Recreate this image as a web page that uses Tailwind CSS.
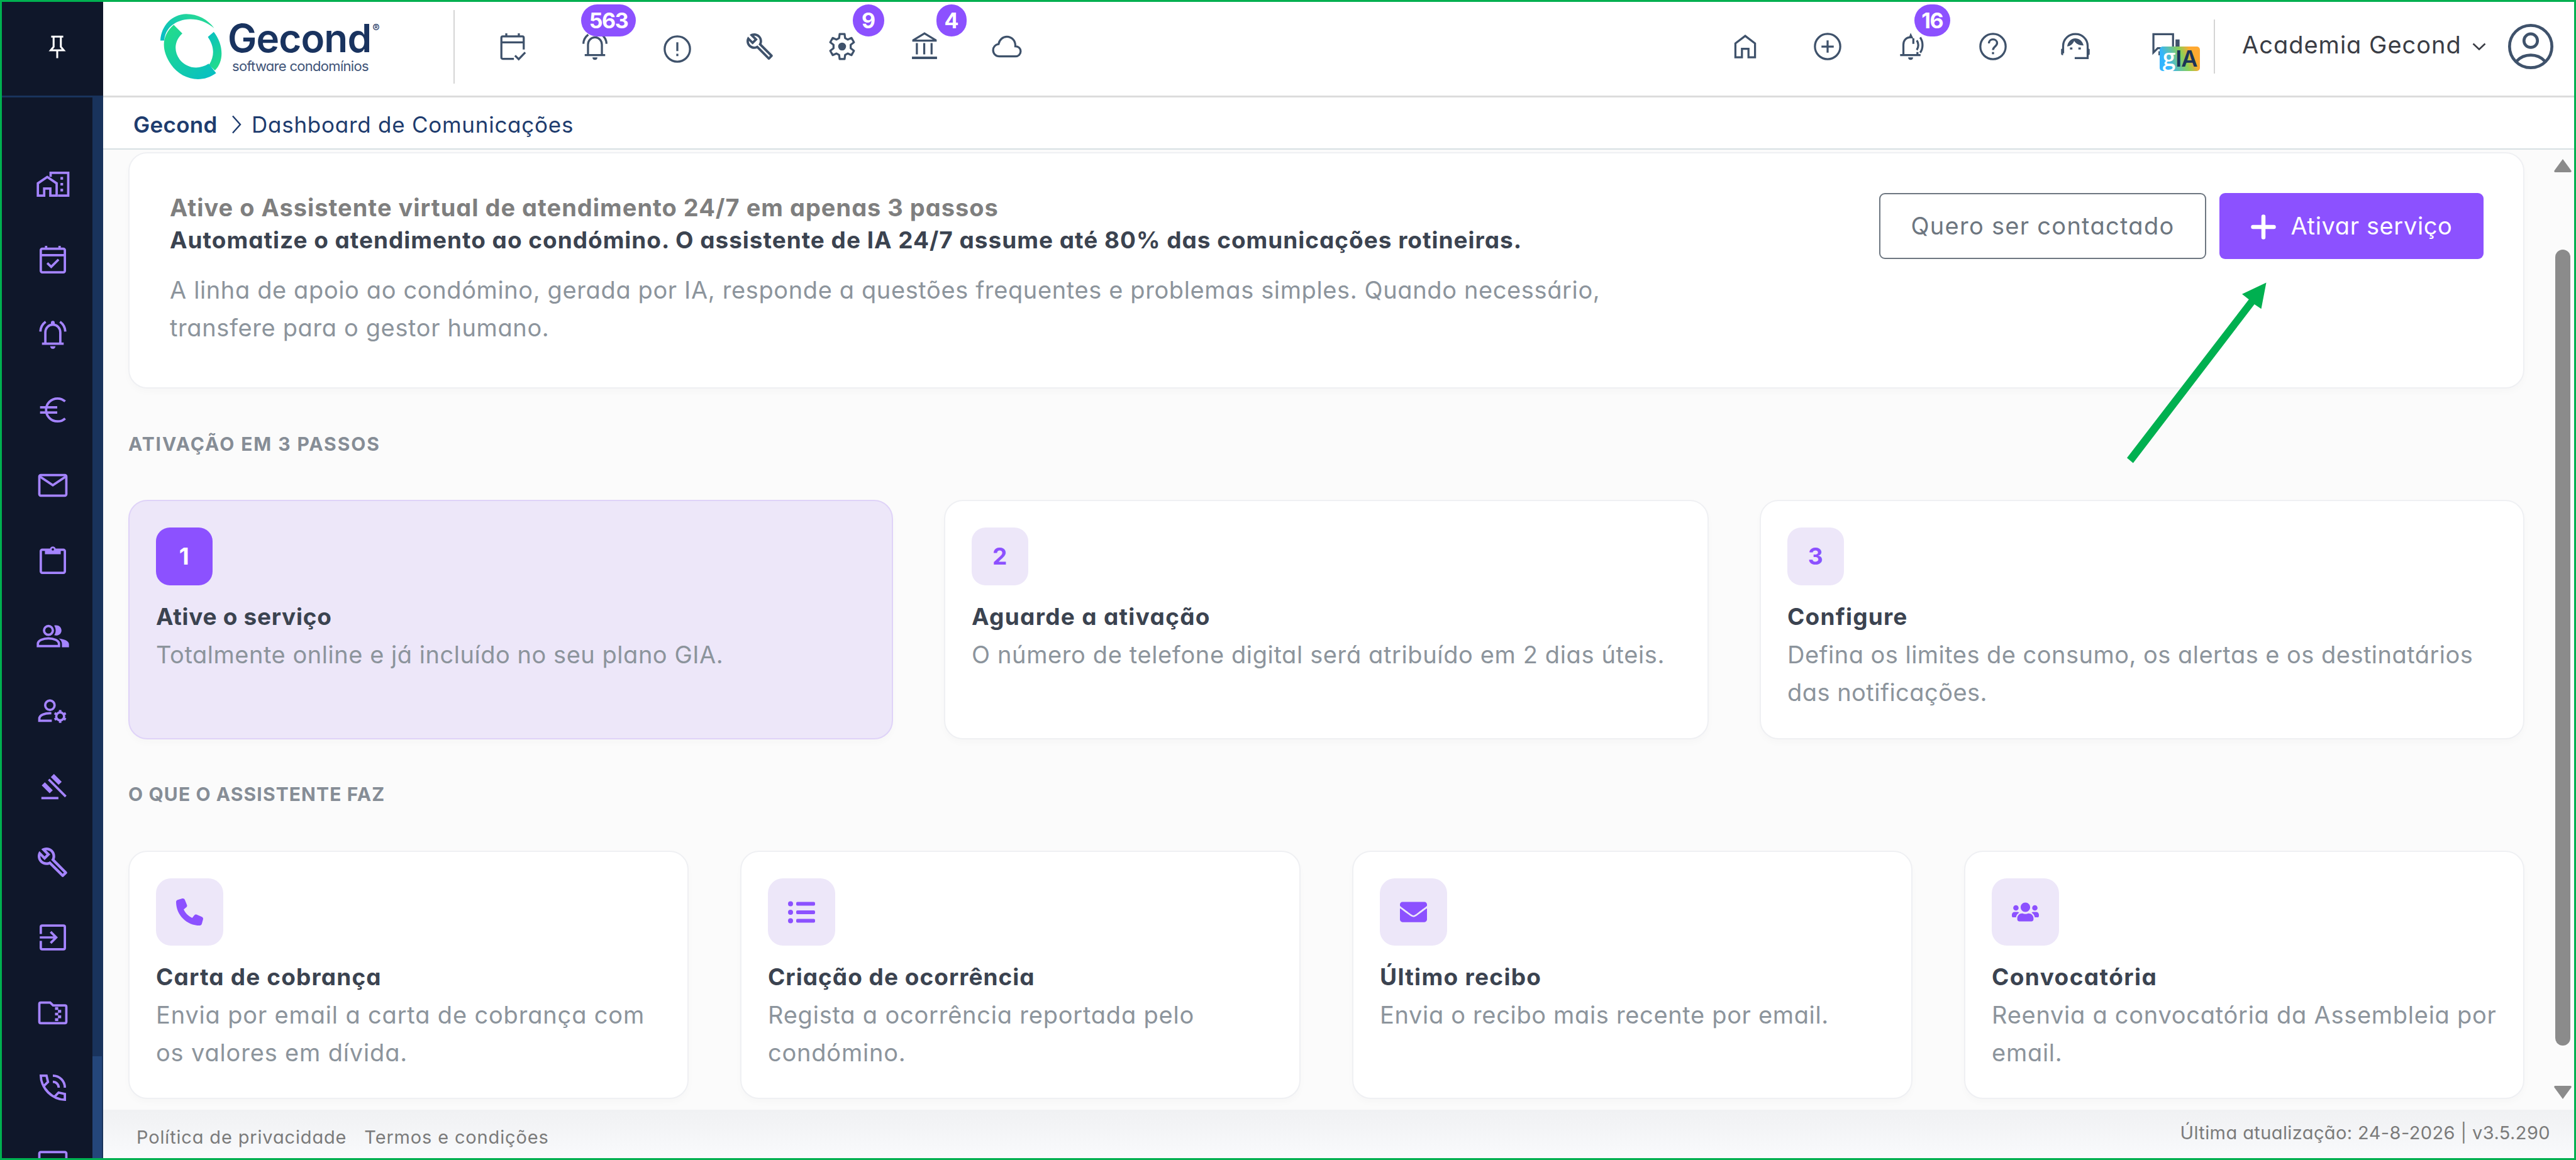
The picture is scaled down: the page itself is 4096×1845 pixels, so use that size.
<!DOCTYPE html>
<html lang="pt">
<head>
    <meta charset="UTF-8">
    <meta name="viewport" content="width=device-width, initial-scale=1.0">
    <title>Gecond - Dashboard de Comunicações</title>
    <script src="https://cdn.jsdelivr.net/npm/@tailwindcss/browser@4"></script>
</head>
<body class="bg-white font-['Inter',sans-serif] [font-feature-settings:'cv11'] overflow-hidden">
    <div class="relative flex w-[4096px] h-[1845px] border-[3px] border-[#00b050] overflow-hidden">

        <!-- Sidebar -->
        <aside class="flex flex-col w-[161px] shrink-0 bg-[#0f172a]">
            <div class="flex items-center justify-center h-[152px] shrink-0 border-b-[3px] border-[#19335c] pl-[14px] pb-[7px]">
                <svg class="size-[46px] text-white" viewBox="0 0 24 24" fill="none" stroke="currentColor" stroke-width="1.6"><path d="M7 3.8h10M9 3.8v8.4l-2.4 2.9h10.8L15 12.2V3.8M12 15.1v6.6"/></svg>
            </div>
            <div class="flex flex-1 min-h-0">
                <nav class="flex flex-col w-[144px] pt-[78px] pl-[3px] overflow-hidden text-[#a584ff]">
                    <a class="flex items-center justify-center h-[119.8px] pl-[14px] shrink-0"><svg class="size-[56px]" viewBox="0 0 24 24" fill="none" stroke="currentColor" stroke-width="1.6"><path d="M10.5 7V4.2h12v15.6h-7M1.8 19.8v-8.4l6.4-4.3 6.4 4.3v8.4h-4.3v-4.9H6.1v4.9z"/><path stroke-width="1.8" d="M17.2 8h1.8M17.2 12h1.8M17.2 16h1.8"/></svg></a>
                    <a class="flex items-center justify-center h-[119.8px] pl-[14px] shrink-0"><svg class="size-[56px]" viewBox="0 0 24 24" fill="none" stroke="currentColor" stroke-width="1.6"><rect x="3.8" y="4.6" width="16.4" height="16" rx="1"/><path d="M3.8 8.9h16.4M7.4 2.6v2M16.6 2.6v2M8.2 14.3l2.7 2.6 5-5"/></svg></a>
                    <a class="flex items-center justify-center h-[119.8px] pl-[14px] shrink-0"><svg class="size-[56px]" viewBox="0 0 24 24" fill="none" stroke="currentColor" stroke-width="1.6"><path d="M4.6 18.3h14.8M6.9 18.3v-7.7c0-3 2.2-5.3 5.1-5.3s5.1 2.3 5.1 5.3v7.7M3.5 10c.1-2.7 1.4-5.1 3.6-6.7M20.5 10c-.1-2.7-1.4-5.1-3.6-6.7"/><path fill="currentColor" stroke="none" d="M10.2 20h3.6a1.8 1.8 0 0 1-3.6 0zM10.7 5.6V4a1.3 1.3 0 0 1 2.6 0v1.6z"/></svg></a>
                    <a class="flex items-center justify-center h-[119.8px] pl-[14px] shrink-0"><svg class="size-[56px]" viewBox="0 0 24 24" fill="none" stroke="currentColor" stroke-width="1.6"><path d="M20.4 6.2a8 8 0 0 0-5.2-2c-4.4 0-7.8 3.5-7.8 7.8s3.4 7.8 7.8 7.8c2 0 3.8-.7 5.2-2M3.3 10.2H15M3.3 13.8H15"/></svg></a>
                    <a class="flex items-center justify-center h-[119.8px] pl-[14px] shrink-0"><svg class="size-[56px]" viewBox="0 0 24 24" fill="none" stroke="currentColor" stroke-width="1.6"><rect x="2.8" y="5" width="18.4" height="14" rx="1"/><path d="M3.2 6l8.8 5.9L20.8 6"/></svg></a>
                    <a class="flex items-center justify-center h-[119.8px] pl-[14px] shrink-0"><svg class="size-[56px]" viewBox="0 0 24 24" fill="none" stroke="currentColor" stroke-width="1.6"><rect x="3.8" y="4.4" width="16.4" height="15.8" rx="1"/><path fill="currentColor" stroke="none" d="M6.6 4.2h10.8v3.3H6.6z"/><circle cx="12" cy="4.2" r="1.4" fill="#0f172a" stroke-width="1.2"/></svg></a>
                    <a class="flex items-center justify-center h-[119.8px] pl-[14px] shrink-0"><svg class="size-[56px]" viewBox="0 0 24 24" fill="none" stroke="currentColor" stroke-width="1.6"><circle cx="9" cy="8" r="3"/><path d="M1.8 18.7v-1.5c0-2.4 3.7-3.8 7.2-3.8s7.2 1.4 7.2 3.8v1.5z"/><path fill="currentColor" stroke="none" d="M12.9 11.3c1.4-1.9 1.4-4.7 0-6.6 2.5-.8 5 .8 5 3.3s-2.5 4.1-5 3.300zM18.200 19.500v-2.300c0-1.500-.8-2.800-2.200-3.700 3.500.4 7 1.700 7 3.900v2.100z"/></svg></a>
                    <a class="flex items-center justify-center h-[119.8px] pl-[14px] shrink-0"><svg class="size-[56px]" viewBox="0 0 24 24" fill="none" stroke="currentColor" stroke-width="1.6"><circle cx="10" cy="8" r="3.2"/><path d="M11.3 18.6H2.8v-1.4c0-2.4 3.6-3.9 8.2-3.7"/><circle cx="17" cy="15.6" r="2.7"/><path stroke-width="1.7" d="M17 11.2V13M17 18.2V20M13.2 13.4l1.5.9M19.3 16.9l1.5.9M13.2 17.8l1.5-.9M19.3 14.3l1.5-.9"/></svg></a>
                    <a class="flex items-center justify-center h-[119.8px] pl-[14px] shrink-0"><svg class="size-[56px]" viewBox="0 0 24 24" fill="none" stroke="currentColor" stroke-width="1.6"><path d="M4.200 19.900h11.600M9.200 7.200l11.600 11.600"/><path stroke-width="3" d="M11.700 4.500L17 9.800M5.500 10.200l5.400 5.400"/></svg></a>
                    <a class="flex items-center justify-center h-[119.8px] pl-[14px] shrink-0"><svg class="size-[47px]" viewBox="1 1 22 22" fill="currentColor"><path d="M22.61 18.99l-9.08-9.08c.93-2.34.45-5.1-1.44-7C9.79.61 6.21.4 3.66 2.26L7.5 6.11 6.08 7.52 2.25 3.69C.39 6.23.6 9.82 2.9 12.11c1.86 1.86 4.57 2.35 6.89 1.48l9.11 9.11c.39.39 1.02.39 1.41 0l2.3-2.3c.4-.38.4-1.01 0-1.41zm-3 1.6l-9.46-9.46c-.61.45-1.29.72-2 .82-1.36.2-2.79-.21-3.83-1.25C3.37 9.76 2.93 8.5 3 7.26l3.09 3.09 4.24-4.24-3.09-3.09c1.24-.07 2.49.37 3.44 1.31 1.08 1.08 1.49 2.57 1.24 3.96-.12.71-.42 1.37-.88 1.96l9.45 9.45-.88.89z"/></svg></a>
                    <a class="flex items-center justify-center h-[119.8px] pl-[14px] shrink-0"><svg class="size-[56px]" viewBox="0 0 24 24" fill="none" stroke="currentColor" stroke-width="1.6"><path d="M3.8 9.6V4.9c0-.6.4-1 1-1h14.4c.6 0 1 .4 1 1v14.2c0 .6-.4 1-1 1H4.8c-.6 0-1-.4-1-1v-4.7M3.1 12h11M10.5 8.2l3.8 3.8-3.8 3.8"/></svg></a>
                    <a class="flex items-center justify-center h-[119.8px] pl-[14px] shrink-0"><svg class="size-[56px]" viewBox="0 0 24 24" fill="none" stroke="currentColor" stroke-width="1.6"><path d="M2.8 18V6c0-.6.4-1 1-1h6.4l2 1.9h8c.6 0 1 .4 1 1V18c0 .6-.4 1-1 1H3.8c-.6 0-1-.4-1-1z"/><path stroke-width="1.9" d="M13.500 9h2.200M15.500 10.900h2.200M13.500 12.800h2.200M15.500 14.700h2.200M13.500 16.600h2.200"/></svg></a>
                    <a class="flex items-center justify-center h-[119.8px] pl-[14px] shrink-0"><svg class="size-[56px]" viewBox="0 0 24 24" fill="none" stroke="currentColor" stroke-width="1.6"><path d="M3.8 3.8h3.9l1 4.3-3 2.9c1.7 3.3 4 5.6 7.3 7.3l2.900-3 4.300 1v3.900C11.800 20.200 3.800 12.200 3.800 3.800zM12 3.800c4.600 0 8.200 3.600 8.200 8.200M12 8c2.300 0 4 1.700 4 4"/></svg></a>
                    <a class="flex items-center justify-center h-[119.8px] pl-[14px] shrink-0"><svg class="size-[56px]" viewBox="0 0 24 24" fill="none" stroke="currentColor" stroke-width="1.6"><rect x="2.8" y="4.4" width="18.4" height="14" rx="1"/></svg></a>
                </nav>
                <div class="flex flex-col justify-end w-[17px] bg-[#19335c]">
                    <div class="h-[162px] w-[15px] bg-[#24467a]"></div>
                </div>
            </div>
        </aside>

        <div class="flex flex-col flex-1 min-w-0">
            <!-- Top bar -->
            <header class="flex items-center h-[152px] shrink-0 border-b-[3px] border-[#dcdcdc] pb-[7px] text-[#3f526b]">
                <svg class="w-[98px] h-[104px] ml-[91px] shrink-0" viewBox="0 0 314 333">
                    <defs>
                        <linearGradient id="ga" x1="0" y1="1" x2="1" y2="0"><stop offset="0.1" stop-color="#08bdc4"/><stop offset="1" stop-color="#2ddf8b"/></linearGradient>
                        <linearGradient id="gb" x1="0" y1="0" x2="0.9" y2="1"><stop offset="0.1" stop-color="#22db8d"/><stop offset="1" stop-color="#07bfc3"/></linearGradient>
                        <linearGradient id="gc" x1="0" y1="0" x2="0.3" y2="1"><stop offset="0" stop-color="#07bfc3"/><stop offset="1" stop-color="#22db8d"/></linearGradient>
                    </defs>
                    <path fill="url(#ga)" d="M0 136C4 60 60 2 132 1c58 0 110 28 142 72C232 38 190 26 150 27 80 29 24 70 20 136z"/>
                    <path fill="url(#gc)" d="M272 92l-30 26c30 44 38 92 6 142l30 28c46-44 46-130-6-196z"/>
                    <path fill="url(#gb)" d="M68 56l44 44c-42 38-44 92-14 132 34 44 96 56 148 22l38 48c-78 58-180 30-230-44C4 184 4 112 68 56z"/>
                </svg>
                <div class="flex flex-col ml-[9px] mt-[1px] w-[240px] text-[#19335f] whitespace-nowrap">
                    <div class="flex items-start h-[60px]">
                        <span class="text-[62px] leading-[60px] font-semibold tracking-[-0.9px]">Gecond</span>
                        <span class="text-[17px] leading-[16px] mt-[6px] ml-[2px]">®</span>
                    </div>
                    <span class="text-[22px] leading-[28px] tracking-[-0.7px] pl-[7px] text-[#3f5478]">software condomínios</span>
                </div>
                <div class="w-[2px] h-[117px] bg-[#d5d5d5] ml-[119px]"></div>

                <div class="flex items-center gap-[79px] ml-[66px]">
                    <svg class="size-[52px]" viewBox="0 0 24 24" fill="none" stroke="currentColor" stroke-width="1.5"><path d="M13 21H4.8c-.6 0-1-.4-1-1V5.500c0-.6.4-1 1-1h14.400c.6 0 1 .4 1 1v8.700M3.800 8.900h16.400M7.400 2.300v2M16.600 2.300v2M13.800 18.600l2.700 2.700 4.800-5"/></svg>
                    <div class="relative">
                        <svg class="size-[52px]" viewBox="0 0 24 24" fill="none" stroke="currentColor" stroke-width="1.5"><path d="M4.5 18.3h15M6.900 18.300v-7.700c0-3 2.200-5.300 5.100-5.300s5.100 2.300 5.100 5.300v7.700M3.500 10c.1-2.700 1.400-5.100 3.600-6.700M20.500 10c-.1-2.700-1.400-5.100-3.600-6.700"/><path fill="currentColor" stroke="none" d="M10.200 20h3.600a1.800 1.800 0 0 1-3.600 0z"/></svg>
                        <span class="absolute left-[4px] top-[-41px] flex items-center justify-center w-[87px] h-[51px] rounded-full bg-[#8c51ff] text-white text-[34px] font-bold tracking-[-1.5px]">563</span>
                    </div>
                    <svg class="size-[52px] mt-[8px]" viewBox="0 0 24 24" fill="none" stroke="currentColor" stroke-width="1.5"><circle cx="12" cy="12" r="9.3"/><path d="M12 7v6.500M12 15.500v1.700"/></svg>
                    <div class="flex items-center justify-center size-[52px]"><svg class="size-[42px]" viewBox="1 1 22 22" fill="currentColor"><path d="M22.61 18.99l-9.08-9.08c.93-2.34.45-5.1-1.44-7C9.79.61 6.21.4 3.66 2.26L7.5 6.11 6.08 7.52 2.25 3.69C.39 6.23.6 9.82 2.9 12.11c1.86 1.86 4.57 2.35 6.89 1.48l9.11 9.11c.39.39 1.02.39 1.41 0l2.3-2.3c.4-.38.4-1.01 0-1.41zm-3 1.6l-9.46-9.46c-.61.45-1.29.72-2 .82-1.36.2-2.79-.21-3.83-1.25C3.37 9.76 2.93 8.5 3 7.26l3.09 3.09 4.24-4.24-3.09-3.09c1.24-.07 2.49.37 3.44 1.31 1.08 1.08 1.49 2.57 1.24 3.96-.12.71-.42 1.37-.88 1.96l9.45 9.45-.88.89z"/></svg></div>
                    <div class="relative">
                        <svg class="size-[52px]" viewBox="0 0 24 24" fill="none" stroke="currentColor" stroke-width="1.5" stroke-linejoin="round"><path d="M10.2 2.8h3.6l.4 3 1.9 1.1 2.8-1.2 1.8 3.2-2.4 1.8v2.6l2.4 1.8-1.8 3.2-2.8-1.2-1.9 1.1-.4 3h-3.6l-.4-3-1.9-1.1-2.8 1.2-1.8-3.2 2.4-1.8v-2.6L3.3 8.900l1.800-3.200 2.800 1.200 1.900-1.100z"/><circle cx="12" cy="12" r="2.900" fill="currentColor" stroke="none"/></svg>
                        <span class="absolute left-[43px] top-[-41px] flex items-center justify-center w-[50px] h-[51px] rounded-full bg-[#8c51ff] text-white text-[34px] font-bold">9</span>
                    </div>
                    <div class="relative">
                        <svg class="size-[52px]" viewBox="0 0 24 24" fill="none" stroke="currentColor" stroke-width="1.5"><path d="M3.8 7.3L12 2.4l8.2 4.9v.4H3.8zM6.400 9.500v8.300M11.800 9.500v8.300M17.200 9.500v8.300"/><path stroke-width="1.8" d="M2.8 20.3h18.4"/></svg>
                        <span class="absolute left-[45px] top-[-41px] flex items-center justify-center w-[48px] h-[51px] rounded-full bg-[#8c51ff] text-white text-[34px] font-bold">4</span>
                    </div>
                    <svg class="size-[52px]" viewBox="0 0 24 24" fill="none" stroke="currentColor" stroke-width="1.5"><path d="M6.5 19.2c-2.6 0-4.6-1.9-4.6-4.5 0-2.4 1.7-4.2 4-4.5.6-3.1 3-5.4 6.1-5.4 3.5 0 6.2 2.8 6.2 6.4v.6c2.3 0 3.9 1.6 3.900 3.700s-1.600 3.700-3.800 3.700z"/></svg>
                </div>

                <div class="flex items-center gap-[79.2px] ml-auto">
                    <svg class="size-[52px]" viewBox="0 0 24 24" fill="none" stroke="currentColor" stroke-width="1.5"><path d="M4.8 19.9V9.700L12 4.200l7.200 5.500v10.200h-4.800v-6.200H9.600v6.200z"/></svg>
                    <svg class="size-[52px]" viewBox="0 0 24 24" fill="none" stroke="currentColor" stroke-width="1.5"><circle cx="12" cy="12" r="9.3"/><path d="M12 7.500v9M7.500 12h9"/></svg>
                    <div class="relative">
                        <svg class="size-[52px]" viewBox="0 0 24 24" fill="none" stroke="currentColor" stroke-width="1.5"><path d="M4.300 18.300h15M6.700 18.300v-7.700c0-3 2-5.300 4.800-5.300M14 6v4M16.500 14.500c1.500-2 1.500-5 0-7M19 16.500c2.300-3 2.300-8 0-11.200M17 16v2.300"/><path fill="currentColor" stroke="none" d="M10.200 20h3.600a1.800 1.800 0 0 1-3.600 0zM10.500 6l1.500-4 2 4z"/></svg>
                        <span class="absolute left-[32px] top-[-41px] flex items-center justify-center w-[57px] h-[51px] rounded-full bg-[#8c51ff] text-white text-[34px] font-bold tracking-[-1.5px]">16</span>
                    </div>
                    <svg class="size-[52px]" viewBox="0 0 24 24" fill="none" stroke="currentColor" stroke-width="1.5"><circle cx="12" cy="12" r="9.3"/><path d="M9 9.700c0-1.700 1.300-2.900 3-2.900s3 1.100 3 2.700c0 2.400-3 2.600-3 5M12 16v1.700"/></svg>
                    <svg class="size-[52px]" viewBox="0 0 24 24" fill="none" stroke="currentColor" stroke-width="1.5"><path d="M3 17V11.500a9 8.700 0 0 1 18 0v9h-9.500"/><path fill="currentColor" stroke="none" d="M1.500 14l1.500-1v5.300h-.6c-.5 0-.9-.5-.9-1zM22.500 14L21 13v5.300h.6c.5 0 .9-.4.900-.9zM6 12c.4-3.400 2.800-6 5.900-6 2.900 0 5.400 2 6.100 5.200-3.100.2-5.400-1-6.900-3.400-.8 2.200-2.600 3.700-5.100 4.200z"/><path d="M8 13.400h1.800M14.200 13.400H16"/></svg>
                </div>
                <div class="relative ml-[92px]">
                    <svg class="size-[52px]" viewBox="0 0 24 24" fill="none" stroke="currentColor" stroke-width="1.5"><path d="M2.800 2.900h14.400v10.300H6L2.800 16.400z"/><path fill="currentColor" stroke="none" d="M19 6.800h3v7h-3zM6.500 15.500h3v3h-3z"/></svg>
                    <!-- gIA badge -->
                    <div class="absolute left-[16px] top-[26px] flex items-center justify-center w-[64px] h-[39px] rounded-[5px] bg-linear-[65deg,#33b4ff_20%,#8bcf55_58%,#ffa931_78%] leading-[39px]">
                        <span class="font-['Open_Sans'] font-semibold text-white text-[37px] mt-[-6px]">g</span><span class="font-semibold text-[#1a3358] text-[36px] tracking-[-1px]">IA</span>
                    </div>
                </div>
                <div class="w-[2px] h-[86px] bg-[#d5d5d5] ml-[50px]"></div>
                <div class="w-[349px] ml-[43px] text-[38px] leading-[44px] tracking-[1px] text-[#3a3d45] whitespace-nowrap -mt-[6px]">Academia Gecond</div>
                <svg class="w-[22px] h-[12px] ml-[17px]" viewBox="0 0 22 12" fill="none" stroke="#3a3d45" stroke-width="2.6"><path d="M1.500 1.500L11 10.500l9.500-9"/></svg>
                <svg class="size-[86px] ml-[28px] mr-[26px]" viewBox="0 0 24 24" fill="none" stroke="currentColor" stroke-width="1.3"><circle cx="12" cy="12" r="9.4"/><circle cx="12" cy="9.400" r="3"/><path d="M5.700 18.500c1.600-1.700 3.800-2.700 6.300-2.700s4.700 1 6.300 2.700"/></svg>
            </header>

            <!-- Breadcrumb -->
            <div class="flex items-center h-[83px] shrink-0 border-b-[2px] border-[#d7e0e2] pl-[48px] pt-[5px] text-[35px] leading-[44px] text-[#1e3c6e] whitespace-nowrap">
                <span class="font-semibold tracking-[0.3px] w-[134px]">Gecond</span>
                <svg class="w-[16px] h-[30px] ml-[22px] mr-[16px]" viewBox="0 0 16 30" fill="none" stroke="currentColor" stroke-width="2.4"><path d="M2 1.500L14 15 2 28.500"/></svg>
                <span class="tracking-[0.74px]">Dashboard de Comunicações</span>
            </div>

            <!-- Content -->
            <main class="flex h-[1527px] shrink-0 bg-[#fbfbfb]">
                <div class="w-[3810px] ml-[40px] pt-[4px]">
                    <section class="flex justify-between h-[376px] rounded-[30px] border-2 border-[#eff0f3] bg-white shadow-[0_6px_12px_rgba(0,0,0,0.02)] pl-[64px] pr-[63px]">
                        <div class="pt-[60px] whitespace-nowrap">
                            <h1 class="text-[38px] leading-[52px] font-bold tracking-[0.99px] text-[#7f7f7f]">Ative o Assistente virtual de atendimento 24/7 em apenas 3 passos</h1>
                            <h2 class="text-[37px] leading-[52px] font-bold tracking-[0.97px] text-[#3b4350]">Automatize o atendimento ao condómino. O assistente de IA 24/7 assume até 80% das comunicações rotineiras.</h2>
                            <p class="mt-[23px] text-[38px] leading-[60px] tracking-[0.62px] text-[#8c949c]">A linha de apoio ao condómino, gerada por IA, responde a questões frequentes e problemas simples. Quando necessário,<br>transfere para o gestor humano.</p>
                        </div>
                        <div class="flex gap-[21px] pt-[63px] text-[38px] whitespace-nowrap">
                            <button class="flex items-center justify-center w-[520px] h-[105px] rounded-[9px] border-2 border-[#6d7680] text-[#6d7680] tracking-[1.28px]">Quero ser contactado</button>
                            <button class="flex items-center justify-center w-[420px] h-[105px] rounded-[9px] bg-[#8c51ff] text-white tracking-[0.63px]">
                                <svg class="size-[40px] mr-[24px] mt-[3px]" viewBox="0 0 40 40" stroke="currentColor" stroke-width="6.500" stroke-linecap="round"><path d="M20 3.500v33M3.500 20h33"/></svg>
                                Ativar serviço
                            </button>
                        </div>
                    </section>

                    <h3 class="mt-[66px] text-[30px] leading-[44px] font-bold tracking-[1.9px] text-[#868d96]">ATIVAÇÃO EM 3 PASSOS</h3>
                    <div class="grid grid-cols-3 gap-[81px] mt-[67px] text-[38px] leading-[60px] tracking-[0.62px] text-[#8c949c]">
                        <div class="h-[381px] rounded-[30px] border-2 border-[#dfd3f8] bg-[#ede7f9] shadow-[0_6px_12px_rgba(0,0,0,0.02)] px-[42px] pt-[42px]">
                            <div class="flex items-center justify-center w-[90px] h-[92px] rounded-[22px] bg-[#8c51ff] text-white text-[37px] font-bold">1</div>
                            <h4 class="mt-[20px] text-[37px] leading-[60px] font-bold tracking-[0.7px] text-[#3b4350]">Ative o serviço</h4>
                            <p class="tracking-[0.53px]">Totalmente online e já incluído no seu plano GIA.</p>
                        </div>
                        <div class="h-[381px] rounded-[30px] border-2 border-[#eff0f3] bg-white shadow-[0_6px_12px_rgba(0,0,0,0.02)] px-[42px] pt-[42px]">
                            <div class="flex items-center justify-center w-[90px] h-[92px] rounded-[22px] bg-[#ede7f9] text-[#8c51ff] text-[37px] font-bold">2</div>
                            <h4 class="mt-[20px] text-[37px] leading-[60px] font-bold tracking-[1.3px] text-[#3b4350]">Aguarde a ativação</h4>
                            <p>O número de telefone digital será atribuído em 2 dias úteis.</p>
                        </div>
                        <div class="h-[381px] rounded-[30px] border-2 border-[#eff0f3] bg-white shadow-[0_6px_12px_rgba(0,0,0,0.02)] px-[42px] pt-[42px]">
                            <div class="flex items-center justify-center w-[90px] h-[92px] rounded-[22px] bg-[#ede7f9] text-[#8c51ff] text-[37px] font-bold">3</div>
                            <h4 class="mt-[20px] text-[37px] leading-[60px] font-bold tracking-[1.2px] text-[#3b4350]">Configure</h4>
                            <p class="tracking-[0.47px]">Defina os limites de consumo, os alertas e os destinatários das notificações.</p>
                        </div>
                    </div>

                    <h3 class="mt-[65px] text-[30px] leading-[44px] font-bold tracking-[1.1px] text-[#868d96]">O QUE O ASSISTENTE FAZ</h3>
                    <div class="grid grid-cols-4 gap-[82px] mt-[68px] text-[38px] leading-[60px] tracking-[0.83px] text-[#8c949c]">
                        <div class="h-[395px] rounded-[30px] border-2 border-[#eff0f3] bg-white shadow-[0_6px_12px_rgba(0,0,0,0.02)] pl-[42px] pr-[36px] pt-[42px]">
                            <div class="flex items-center justify-center size-[107px] rounded-[24px] bg-[#ede7f9] text-[#8c51ff]">
                                <svg class="size-[43px]" viewBox="0 0 512 512" fill="currentColor"><path d="M164.900 24.600c-7.700-18.600-28-28.500-47.400-23.200l-88 24C12.100 30.200 0 46 0 64c0 247.400 200.600 448 448 448 18 0 33.800-12.100 38.600-29.500l24-88c5.300-19.400-4.600-39.700-23.200-47.400l-96-40c-16.300-6.800-35.200-2.100-46.300 11.600L304.700 368C234.300 334.700 177.300 277.700 144 207.300L193.300 167c13.700-11.200 18.400-30 11.600-46.300l-40-96z"/></svg>
                            </div>
                            <h4 class="mt-[20px] text-[37px] leading-[60px] font-bold tracking-[1.15px] text-[#3b4350]">Carta de cobrança</h4>
                            <p>Envia por email a carta de cobrança com<br>os valores em dívida.</p>
                        </div>
                        <div class="h-[395px] rounded-[30px] border-2 border-[#eff0f3] bg-white shadow-[0_6px_12px_rgba(0,0,0,0.02)] pl-[42px] pr-[36px] pt-[42px]">
                            <div class="flex items-center justify-center size-[107px] rounded-[24px] bg-[#ede7f9] text-[#8c51ff]">
                                <svg class="w-[43px] h-[36px]" viewBox="0 0 43 36" fill="currentColor"><circle cx="4" cy="4.500" r="4"/><circle cx="4" cy="18" r="4"/><circle cx="4" cy="31.500" r="4"/><rect x="13" y="1.500" width="30" height="6" rx="2"/><rect x="13" y="15" width="30" height="6" rx="2"/><rect x="13" y="28.500" width="30" height="6" rx="2"/></svg>
                            </div>
                            <h4 class="mt-[20px] text-[37px] leading-[60px] font-bold tracking-[1px] text-[#3b4350]">Criação de ocorrência</h4>
                            <p class="tracking-[0.78px]">Regista a ocorrência reportada pelo<br>condómino.</p>
                        </div>
                        <div class="h-[395px] rounded-[30px] border-2 border-[#eff0f3] bg-white shadow-[0_6px_12px_rgba(0,0,0,0.02)] pl-[42px] pr-[36px] pt-[42px]">
                            <div class="flex items-center justify-center size-[107px] rounded-[24px] bg-[#ede7f9] text-[#8c51ff]">
                                <svg class="size-[43px]" viewBox="0 0 512 512" fill="currentColor"><path d="M502.300 190.800c3.900-3.100 9.700-.2 9.700 4.700V400c0 26.500-21.500 48-48 48H48c-26.500 0-48-21.500-48-48V195.600c0-5 5.700-7.800 9.700-4.700 22.400 17.400 52.100 39.500 154.100 113.600 21.100 15.400 56.700 47.800 92.200 47.600 35.700.3 72-32.800 92.300-47.600 102-74.100 131.600-96.300 154-113.700zM256 320c23.200.4 56.600-29.200 73.400-41.400 132.700-96.300 142.800-104.700 173.400-128.700 5.800-4.500 9.200-11.500 9.200-18.900v-19c0-26.500-21.500-48-48-48H48c-26.500 0-48 21.500-48 48v19c0 7.400 3.400 14.300 9.200 18.900 30.600 23.900 40.700 32.400 173.400 128.700 16.800 12.200 50.200 41.800 73.400 41.400z"/></svg>
                            </div>
                            <h4 class="mt-[20px] text-[37px] leading-[60px] font-bold tracking-[1.3px] text-[#3b4350]">Último recibo</h4>
                            <p class="tracking-[0.66px]">Envia o recibo mais recente por email.</p>
                        </div>
                        <div class="h-[395px] rounded-[30px] border-2 border-[#eff0f3] bg-white shadow-[0_6px_12px_rgba(0,0,0,0.02)] pl-[42px] pr-[36px] pt-[42px]">
                            <div class="flex items-center justify-center size-[107px] rounded-[24px] bg-[#ede7f9] text-[#8c51ff]">
                                <svg class="w-[43px] h-[35px]" viewBox="0 0 640 512" fill="currentColor"><path d="M96 224c35.300 0 64-28.700 64-64s-28.700-64-64-64-64 28.700-64 64 28.700 64 64 64zm448 0c35.300 0 64-28.700 64-64s-28.700-64-64-64-64 28.700-64 64 28.700 64 64 64zm32 32h-64c-17.600 0-33.500 7.100-45.100 18.600 40.300 22.100 68.900 62 75.100 109.400h66c17.700 0 32-14.300 32-32v-32c0-35.300-28.700-64-64-64zm-256 0c61.900 0 112-50.100 112-112S381.900 32 320 32 208 82.100 208 144s50.100 112 112 112zm76.800 32h-8.300c-20.800 10-43.900 16-68.500 16s-47.600-6-68.500-16h-8.300C179.600 288 128 339.600 128 403.200V432c0 26.500 21.500 48 48 48h288c26.500 0 48-21.500 48-48v-28.800c0-63.600-51.600-115.200-115.200-115.200zm-223.700-13.400C161.500 263.100 145.600 256 128 256H64c-35.300 0-64 28.700-64 64v32c0 17.700 14.300 32 32 32h65.900c6.300-47.400 34.900-87.300 75.200-109.400z"/></svg>
                            </div>
                            <h4 class="mt-[20px] text-[37px] leading-[60px] font-bold tracking-[1.4px] text-[#3b4350]">Convocatória</h4>
                            <p class="tracking-[0.73px]">Reenvia a convocatória da Assembleia por<br>email.</p>
                        </div>
                    </div>
                </div>

                <!-- Scrollbar -->
                <div class="flex flex-col items-center w-[28px] ml-auto mr-[4px] pt-[15px] pb-[17px]">
                    <svg class="w-[28px] h-[21px]" viewBox="0 0 28 21" fill="#8b8b8b"><path d="M14 0l13.500 18.500c.6 1 0 2.500-1.300 2.500H1.800c-1.300 0-1.900-1.500-1.300-2.500z"/></svg>
                    <div class="w-[24px] h-[1266px] mt-[123px] rounded-full bg-[#8b8b8b]"></div>
                    <svg class="w-[28px] h-[21px] mt-auto" viewBox="0 0 28 21" fill="#8b8b8b"><path d="M14 21L.5 2.500C-.1 1.500.5 0 1.800 0h24.400c1.300 0 1.900 1.500 1.300 2.500z"/></svg>
                </div>
            </main>

            <!-- Footer -->
            <footer class="flex justify-between flex-1 bg-linear-to-b from-[#f0f1f3] to-[#f9fafc] pl-[53px] pr-[38px] text-[29px] leading-[44px] text-[#7b7b7b] whitespace-nowrap">
                <div class="flex gap-[28px] pt-[22px] tracking-[0.84px]">
                    <a>Política de privacidade</a>
                    <a>Termos e condições</a>
                </div>
                <div class="pt-[15px] tracking-[0.4px]">Última atualização: 24-8-2026 | v3.5.290</div>
            </footer>
        </div>

        <!-- Pointer arrow towards the activation button -->
        <svg class="absolute left-[3379px] top-[446px] w-[222px] h-[288px]" viewBox="3382 450 222 288" fill="#00b050"><path d="M3603.500 450.500L3595.500 492.300 3584.700 485 3391.800 737.400 3382 729.300 3575.800 477.300 3565 468.800z"/></svg>
    </div>
</body>
</html>
